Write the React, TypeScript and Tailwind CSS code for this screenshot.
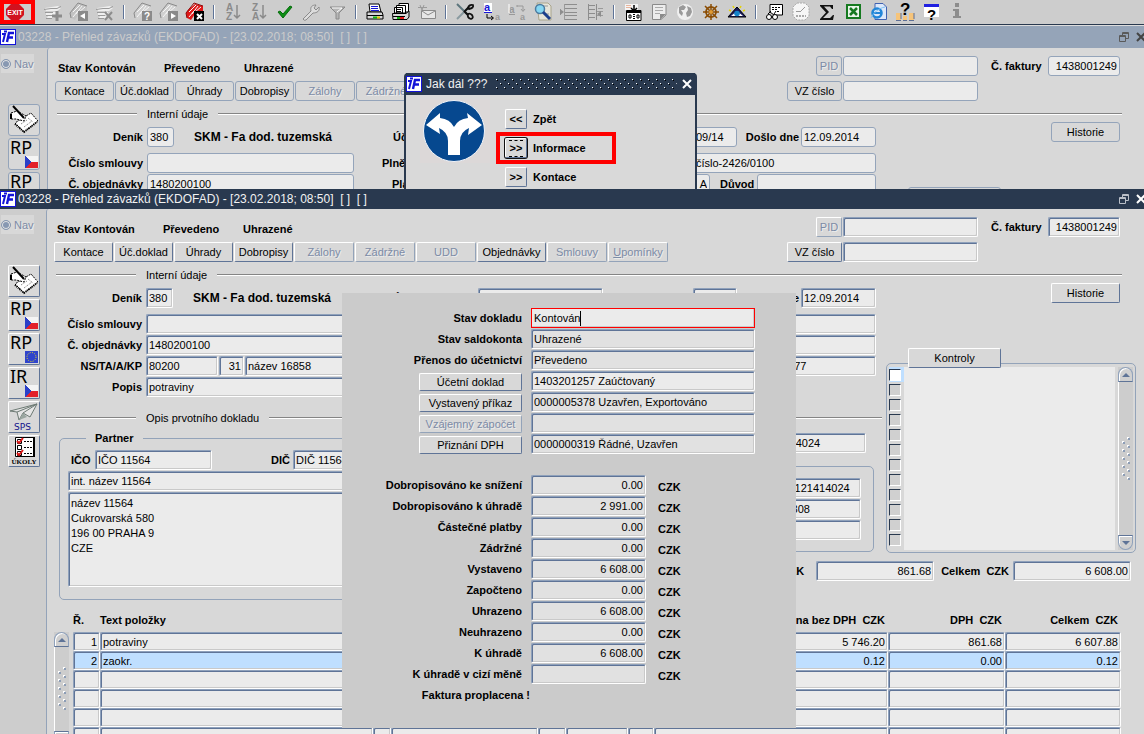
import React, { createContext, useContext } from 'react';
import clsx from 'clsx';

// true inside the inactive window, whose controls lose their bevel
const FlatContext = createContext(false);

const SUNKEN =
  'rounded-[2px] border border-t-[#8fa1bb] border-l-[#8fa1bb] border-r-white border-b-white shadow-[inset_1px_1px_0_#5f7497,inset_-1px_-1px_0_#c9c9c9]';
const RAISED =
  'rounded-[2px] border border-t-white border-l-white border-r-[#5f7497] border-b-[#5f7497]';
const RAISED_OFF =
  'rounded-[2px] border border-t-white border-l-white border-r-[#93a3b9] border-b-[#93a3b9]';
const FLAT = 'rounded-[3px] border border-[#94a4ba]';

interface FieldProps {
  value?: string;
  name?: string;
  className?: string;
  right?: boolean;
}

const Field: React.FC<FieldProps> = ({ value = '', name, className, right }) => {
  const flat = useContext(FlatContext);
  return (
    <input
      aria-label={name}
      defaultValue={value}
      className={clsx(
        'block h-5 min-w-0 shrink-0 px-[2px] text-[11px] text-black outline-none',
        flat ? FLAT : SUNKEN,
        right && 'text-right',
        className ?? 'w-full',
        !className?.includes('bg-') && 'bg-[#ebebeb]',
      )}
    />
  );
};

interface BtnProps {
  children: React.ReactNode;
  className?: string;
  disabled?: boolean;
}

const Btn: React.FC<BtnProps> = ({ children, className, disabled }) => {
  const flat = useContext(FlatContext);
  return (
    <button
      type="button"
      disabled={disabled}
      className={clsx(
        'flex shrink-0 items-center justify-center bg-[#d8d8d8] text-[11px] leading-none whitespace-nowrap',
        flat ? FLAT : disabled ? RAISED_OFF : RAISED,
        disabled ? 'text-[#7c8ba6] [text-shadow:1px_1px_0_#ebebeb]' : 'text-black',
        className,
      )}
    >
      {children}
    </button>
  );
};

const LabeledField: React.FC<FieldProps & { label: string }> = ({ label, ...rest }) => (
  <label className="flex items-center gap-1">
    <span className="w-[88px] shrink-0 text-right">{label}</span>
    <Field {...rest} />
  </label>
);

const Rule: React.FC<{ text: string; className?: string }> = ({ text, className }) => (
  <div className={clsx('flex items-center pt-[5px] pl-[2px] font-normal', className)}>
    <span className="h-[2px] w-20 border-t border-b border-t-[#858585] border-b-white" />
    <span className="px-[10px]">{text}</span>
    <span className="h-[2px] flex-1 border-t border-b border-t-[#858585] border-b-white" />
  </div>
);

const Grip = () => (
  <svg width="9" height="44" viewBox="0 0 9 44" className="my-auto shrink-0">
    {[0, 1, 2, 3, 4, 5].map((i) => (
      <g key={i}>
        <rect x="5" y={i * 8} width="2" height="2" fill="#fff" />
        <rect x="6" y={i * 8 + 1} width="2" height="2" fill="#8c9db6" />
        {i < 5 && <rect x="0" y={i * 8 + 4} width="2" height="2" fill="#fff" />}
        {i < 5 && <rect x="1" y={i * 8 + 5} width="2" height="2" fill="#8c9db6" />}
      </g>
    ))}
  </svg>
);

const Scrollbar: React.FC<{ className?: string }> = ({ className }) => (
  <div className={clsx('flex w-[15px] shrink-0 flex-col items-center bg-[#cdcdcd]', className)}>
    <button
      type="button"
      aria-label="Nahoru"
      className="flex h-[15px] w-full items-center justify-center rounded-t-full border border-[#8fa1bb] border-b-[#5f7497] bg-[#d0d0d0] shadow-[inset_1px_1px_0_#fff]"
    >
      <svg width="8" height="4" viewBox="0 0 8 4"><path d="M0 4L4 0L8 4Z" fill="#5f7497" /></svg>
    </button>
    <div className="flex w-full flex-1 justify-center border-l border-white">
      <Grip />
    </div>
    <button
      type="button"
      aria-label="Dolů"
      className="flex h-[15px] w-full items-center justify-center rounded-b-full border border-[#8fa1bb] border-t-[#5f7497] bg-[#d0d0d0] shadow-[inset_1px_1px_0_#fff]"
    >
      <svg width="8" height="4" viewBox="0 0 8 4"><path d="M0 0L4 4L8 0Z" fill="#5f7497" /></svg>
    </button>
  </div>
);

/* ---------- toolbar icons ---------- */

const Glyph: React.FC<{ x: number; y: number; size: number; fill?: string; children: string }> = ({
  x, y, size, fill = '#000', children,
}) => (
  <text x={x} y={y} fontSize={size} fill={fill} fontWeight="bold" fontFamily="Liberation Sans, sans-serif">
    {children}
  </text>
);

const Records = ({ mark }: { mark: 'plus' | 'cross' }) => (
  <>
    <path d="M2 6L15 4L18 6L14 9L3 9ZM3 10H13V13H3ZM5 14H11V16H4Z" fill="#efefef" />
    <path d="M1 7.500L8 6.500H14L18 4.500M2 10.500H10M3 13.500H10M3 16.500H9" stroke="#9a9a9a" fill="none" />
    {mark === 'plus' ? (
      <path d="M14 9V19M9 14H19" stroke="#8c8c8c" strokeWidth="3" />
    ) : (
      <path d="M10 10L17 18M17 10L10 18" stroke="#8c8c8c" strokeWidth="2" />
    )}
  </>
);

const Folder = ({ tone, line, badge, mark }: { tone: string; line: string; badge: string; mark: React.ReactNode }) => (
  <>
    <path d="M1 11L3 8L10 2L18 4L18 9L10 12L6 18L2 16Z" fill={tone} />
    <path d="M4 10L11 3M7 12L13 4M4 15L9 9M10 10L16 5" stroke="#f6f6f6" fill="none" />
    <path d="M2 16L1 11L9 1L18 4" stroke={line} fill="none" />
    <rect x="9" y="9" width="10" height="10" fill={badge} />
    {mark}
  </>
);

const ICONS: Record<string, React.ReactNode> = {
  'Nový záznam': <Records mark="plus" />,
  'Předchozí': <Folder tone="#c2c2c2" line="#8a8a8a" badge="#8a8a8a" mark={<path d="M16 11V17L11 14Z" fill="#fff" />} />,
  'Zrušit záznam': <Records mark="cross" />,
  'Zadat dotaz': <Folder tone="#d0d0d0" line="#8a8a8a" badge="#8a8a8a" mark={<Glyph x={11} y={18} size={10} fill="#fff">?</Glyph>} />,
  'Provést dotaz': <Folder tone="#d0d0d0" line="#8a8a8a" badge="#8a8a8a" mark={<path d="M12 11V17L17 14Z" fill="#fff" />} />,
  'Zrušit dotaz': <Folder tone="#e01818" line="#8c0a0a" badge="#000" mark={<path d="M12 12L17 17M17 12L12 17" stroke="#fff" strokeWidth="2" />} />,
  'Řadit vzestupně': (
    <>
      <Glyph x={3} y={9} size={10} fill="#8a8a8a">A</Glyph>
      <Glyph x={3} y={18} size={10} fill="#8a8a8a">Z</Glyph>
      <path d="M14 3V16M11 13L14 16L17 13" stroke="#8a8a8a" fill="none" strokeWidth="1.500" />
    </>
  ),
  'Řadit sestupně': (
    <>
      <Glyph x={3} y={9} size={10} fill="#8a8a8a">Z</Glyph>
      <Glyph x={3} y={18} size={10} fill="#8a8a8a">A</Glyph>
      <path d="M14 3V16M11 13L14 16L17 13" stroke="#8a8a8a" fill="none" strokeWidth="1.500" />
    </>
  ),
  Potvrdit: <path d="M3 10L8 16L17 5L15 4L8 12L5 9Z" fill="#0c8f14" stroke="#066b0c" />,
  'Nastavení': (
    <path d="M2 17L10 9C9 5 11 3 15 3L13 6L15 8L18 5C19 9 16 11 12 11L5 18Q3 19 2 17Z" fill="#dcdcdc" stroke="#8a8a8a" />
  ),
  Filtr: (
    <>
      <path d="M3 5H18L12 11V17H9V11Z" fill="#b5b5b5" stroke="#8a8a8a" />
      <path d="M5 6H15L10 10" stroke="#fff" fill="none" />
    </>
  ),
  Tisk: (
    <>
      <path d="M4 2H14L16 10H5Z" fill="#fff" stroke="#000" />
      <path d="M6 4.500H13M6 6.500H13M6 8.500H14" stroke="#1717d6" />
      <path d="M2 10H17L18 13V17H2V12Z" fill="#d6d6d6" stroke="#000" />
      <path d="M2 13.500H18" stroke="#000" />
      <path d="M8 15.500H12" stroke="#12b512" strokeWidth="2" />
      <path d="M12 15.500H15" stroke="#e0cc00" strokeWidth="2" />
    </>
  ),
  'Hromadný tisk': (
    <>
      <path d="M8 1.500H17.500V10H8Z" fill="#fff" stroke="#000" />
      <path d="M5.500 3.500H14.500V11H5.500ZM3.500 5.500H11.500V11H3.500Z" fill="#fff" stroke="#000" />
      <path d="M1.500 11.500H15L18 9V15L16 17.500H2Z" fill="#d6d6d6" stroke="#000" />
      <path d="M5 7.500H10M5 9.500H10M2 14.500H14" stroke="#000" />
      <path d="M6 16H9" stroke="#12b512" strokeWidth="2" />
      <path d="M9 16H13" stroke="#e01818" strokeWidth="2" />
    </>
  ),
  'Odeslat poštou': (
    <>
      <path d="M4.500 8.500H18.500V16.500H4.500Z" fill="#e6e6e6" stroke="#8a8a8a" />
      <path d="M5 9L11 13L18 9" stroke="#8a8a8a" fill="none" />
      <path d="M1 5.500H10M3 3L5 8M7 3L5 8" stroke="#9a9a9a" />
    </>
  ),
  Vyjmout: (
    <>
      <path d="M2 2L13 13" stroke="#5d757c" strokeWidth="2" />
      <path d="M2 17L13 6" stroke="#8a9aa0" strokeWidth="2" />
      <path d="M9 9L13 13M9 10L14 5" stroke="#111" strokeWidth="2" />
      <path d="M13 6Q14 2 18 3Q19 6 14 7ZM13 12Q12 16 16 17Q19 16 17 13Q15 11 13 12Z" fill="none" stroke="#111" strokeWidth="1.800" />
    </>
  ),
  'Kopírovat hodnotu': (
    <>
      <rect x="3" y="1" width="8" height="10" fill="#fff" />
      <Glyph x={3} y={9} size={11} fill="#1717d6">a</Glyph>
      <path d="M3 10.500H11" stroke="#1717d6" />
      <path d="M6 12V16H12M10 14L12.500 16L10 18" stroke="#000" fill="none" />
      <Glyph x={14} y={18} size={9} fill="#999">a</Glyph>
    </>
  ),
  'Kopírovat záznam': (
    <>
      <Glyph x={2} y={11} size={10} fill="#999">a</Glyph>
      <path d="M2 12.500H8M10 4H16V9M9 4H11M14 7L16 9.500L18 7" stroke="#999" fill="none" />
      <path d="M2 2V11" stroke="#fff" />
      <Glyph x={13} y={18} size={9} fill="#999">a</Glyph>
    </>
  ),
  Hledat: (
    <>
      <path d="M4 1H15L18 4V18H6Z" fill="#e6e4da" stroke="#aaa58c" />
      <path d="M9 4H15M12 12H16" stroke="#999" />
      <circle cx="7" cy="7" r="4.500" fill="#86d7f3" stroke="#4a7ba0" strokeWidth="1.500" />
      <path d="M10 10L17 17" stroke="#1c3f8c" strokeWidth="3" />
    </>
  ),
  'Vložit řádek': (
    <>
      <path d="M6 2.500H18M6 6.500H18M6 10.500H18M6 13.500H18M6 17.500H18" stroke="#8d8d8d" />
      <path d="M1.500 7V13M5.500 2V18" stroke="#9a9a9a" />
      <path d="M1 7L5 10L1 13Z" fill="#8d8d8d" />
    </>
  ),
  'Odebrat řádek': (
    <>
      <path d="M3.500 2V18M3 3.500H10M3 7.500H10M3 11.500H10M3 15.500H10M11.500 2V18" stroke="#8d8d8d" />
      <path d="M12 9.500H18M12 13.500H18M18 6.500H13" stroke="#9a9a9a" />
      <path d="M12 12L16 9V15Z" fill="#8d8d8d" />
    </>
  ),
  Export: (
    <>
      <path d="M2 2H15V8H2Z" fill="#f4f4f4" />
      <path d="M3 3.500H8M3 5.500H8" stroke="#e8b49c" />
      <path d="M3.500 8.500H18V18.500H3.500Z" fill="#fff" stroke="#000" />
      <path d="M3 10H18" stroke="#000" strokeWidth="2" />
      <path d="M11 3V8M8 6L11 9L14 6" stroke="#000" strokeWidth="1.500" fill="none" />
      <path d="M6 13H8V16H6ZM10 12.500H12M10 14.500H12M10 16.500H12M14 13H16V16H14Z" stroke="#000" fill="none" />
    </>
  ),
  'Poznámka': (
    <>
      <path d="M3.500 2.500H17V13L12 17.500H3.500Z" fill="#ececec" stroke="#8a8a8a" />
      <path d="M6 5.500H14M6 8.500H14M6 11.500H11" stroke="#aaa" />
      <path d="M17 12H11V18Z" fill="#8a8a8a" />
    </>
  ),
  Web: (
    <>
      <circle cx="10" cy="10" r="8" fill="#f0f0f0" />
      <path d="M4 5L8 3L11 5L9 8L6 8L8 11L7 14L4 11ZM12 4L16 6L17 10L15 14L12 15L11 11L13 8Z" fill="#9a9a9a" />
    </>
  ),
  Moduly: (
    <>
      <circle cx="10" cy="10" r="5" fill="none" stroke="#8a4d05" strokeWidth="1.800" />
      <path d="M10 2V18M2 10H18M4 4L16 16M16 4L4 16" stroke="#8a4d05" strokeWidth="1.500" />
      <circle cx="10" cy="10" r="2" fill="#e09b34" />
    </>
  ),
  'Přehled': (
    <>
      <path d="M1 15L10 5L19 15Z" fill="#1a1a5e" stroke="#000" />
      <path d="M4 14Q10 7 16 14Z" fill="#fff" />
      <circle cx="10" cy="11.500" r="2.800" fill="#1583c8" />
      <path d="M2 8L4 9M6 4L7 6M14 4L13 6M18 8L16 9" stroke="#e5d300" strokeWidth="1.500" />
    </>
  ),
  'Detail řádku': (
    <>
      <path d="M5 2.500H17.500V13H9L5 10Z" fill="#fff" stroke="#000" />
      <path d="M7 5.500H15M7 7.500H13M12 9.500H15" stroke="#000" strokeDasharray="2 1" />
      <circle cx="4" cy="15" r="2.500" fill="#fff" stroke="#000" />
      <circle cx="10" cy="15" r="2.500" fill="#fff" stroke="#000" />
      <path d="M3 12L6 9M9 12L11 9M6 15H8" stroke="#000" />
    </>
  ),
  Historie: (
    <>
      <path d="M6 1H14L18 5V14L14 18H6L2 14V5Z" fill="#f6f6f6" stroke="#aaa" strokeDasharray="2 1" />
      <path d="M9 10L14 5M5 9.500H9" stroke="#999" />
      <path d="M5 14H15" stroke="#aaa" strokeDasharray="2 1" strokeWidth="2" />
    </>
  ),
  Suma: <path d="M3 3H16V7H15L13 4.500H7L12 10L6 16H13L16 13H17L16 18H3V17L9 10.500L3 4Z" fill="#111" />,
  Excel: (
    <>
      <rect x="3" y="2" width="15" height="15" fill="#167a20" />
      <rect x="5" y="4" width="11" height="11" fill="#eaf5ea" />
      <path d="M7 6L14 13M14 6L7 13" stroke="#167a20" strokeWidth="2.500" />
    </>
  ),
  'Prohlížeč': (
    <>
      <path d="M6 1.500H14L17.500 5V17.500H6Z" fill="#dce8fa" stroke="#4062b0" />
      <circle cx="8" cy="11" r="4.500" fill="#dce8fa" stroke="#2286d8" strokeWidth="2.600" />
      <path d="M4 11H13" stroke="#2286d8" strokeWidth="2" />
      <path d="M2 16C4 11 10 6 16 5" stroke="#7cc2f2" fill="none" />
    </>
  ),
  'Kdo používá': (
    <>
      <path d="M1 11H6V18H1ZM8 14H12V18H8ZM14 11H19V18H14Z" fill="#f6c47a" />
      <path d="M1 18.500H6M8 18.500H12M14 18.500H19M6 11V17M19 11V17" stroke="#5d6f96" />
      <Glyph x={5} y={13} size={17}>?</Glyph>
    </>
  ),
  'Nápověda': (
    <>
      <rect x="3" y="2" width="15" height="13" fill="#fff" />
      <rect x="3" y="2" width="15" height="3" fill="#2020e0" />
      <Glyph x={6} y={18} size={15}>?</Glyph>
    </>
  ),
  'O aplikaci': (
    <path d="M8 1H12V5H8ZM6 7H12V14H14V16H6V14H8V9H6Z" fill="#8d8d8d" />
  ),
};

const GROUPS = [
  ['Nový záznam', 'Předchozí', 'Zrušit záznam'],
  ['Zadat dotaz', 'Provést dotaz', 'Zrušit dotaz'],
  ['Řadit vzestupně', 'Řadit sestupně', 'Potvrdit', 'Nastavení', 'Filtr'],
  ['Tisk', 'Hromadný tisk', 'Odeslat poštou'],
  ['Vyjmout', 'Kopírovat hodnotu', 'Kopírovat záznam', 'Hledat', 'Vložit řádek', 'Odebrat řádek'],
  ['Export', 'Poznámka', 'Web', 'Moduly', 'Přehled'],
  ['Detail řádku', 'Historie', 'Suma', 'Excel', 'Prohlížeč', 'Kdo používá', 'Nápověda', 'O aplikaci'],
];

const Toolbar = () => (
  <div className="flex h-[25px] shrink-0 border-b border-[#29394f] bg-[#cdcdcd]">
    <button
      type="button"
      aria-label="Exit"
      className="mr-[5px] flex h-6 w-[35px] shrink-0 items-center border-4 border-[#f00] bg-[#cdcdcd] pl-[2px]"
    >
      <svg width="18" height="16" viewBox="0 0 18 16">
        <path d="M5 0H13L18 5V11L13 16H5L0 11V5Z" fill="#d1121f" />
        <text x="9" y="11" textAnchor="middle" fontSize="7" fontWeight="bold" fill="#fff" fontFamily="Liberation Sans, sans-serif">EXIT</text>
      </svg>
    </button>
    {GROUPS.map((group, i) => (
      <React.Fragment key={i}>
        {i > 0 && (
          <span className="flex w-3 shrink-0 items-center justify-center">
            <span className="h-[14px] w-[2px] border-r border-l border-r-white border-l-[#5f7497]" />
          </span>
        )}
        {group.map((name) => (
          <button key={name} type="button" aria-label={name} className="flex h-6 w-[26px] shrink-0 items-center justify-center">
            <svg width="20" height="20" viewBox="0 0 20 20">{ICONS[name]}</svg>
          </button>
        ))}
      </React.Fragment>
    ))}
  </div>
);

/* ---------- window chrome ---------- */

const AppIcon = () => (
  <svg width="16" height="16" viewBox="0 0 16 16" className="shrink-0">
    <rect x="0.500" y="0.500" width="15" height="15" fill="#fff" stroke="#1212d8" />
    <path d="M2 5H5L3 13M4 2.500H7" stroke="#1212d8" strokeWidth="2" fill="none" />
    <path d="M7 13L9 4H14M8 8.500H13" stroke="#1212d8" strokeWidth="2.400" fill="none" />
  </svg>
);

const TitleBar = () => {
  const flat = useContext(FlatContext);
  return (
    <div
      className={clsx(
        'flex shrink-0 items-center gap-[2px] text-[12px] whitespace-pre',
        flat ? 'h-[22px] bg-[#95a4b8] text-[#cbcbcb]' : 'h-5 bg-[#29394f] text-[#f2f2f2]',
      )}
    >
      <AppIcon />
      <span>03228 - Přehled závazků (EKDOFAD) - [23.02.2018; 08:50]  [ ]  [ ]</span>
      <button type="button" aria-label="Obnovit" className="mr-1 ml-auto">
        <svg width="12" height="12" viewBox="0 0 12 12" fill="none" stroke={flat ? '#5a5a5a' : '#b9bfc8'}>
          <path d="M1.500 4.500H7.500V10.500H1.500ZM1 5.500H8M4.500 4V1.500H10.500V7.500H8M4 2.500H10" />
        </svg>
      </button>
      <button type="button" aria-label="Zavřít" className="-mr-px">
        <svg width="9" height="12" viewBox="0 0 9 12" fill="none" stroke={flat ? '#444' : '#fff'} strokeWidth="2">
          <path d="M1 2L9 10M9 2L1 10" />
        </svg>
      </button>
    </div>
  );
};

const Flag = () => (
  <g shapeRendering="crispEdges">
    <rect x="16" y="17" width="13" height="6" fill="#f4f4f4" />
    <rect x="16" y="23" width="13" height="6" fill="#e3202a" />
    <path d="M16 17L23 23L16 29Z" fill="#2a3fc8" />
  </g>
);

const Big: React.FC<{ children: string }> = ({ children }) => (
  <text x="1" y="15" fontSize="18" fontFamily="Noto Sans, sans-serif">{children}</text>
);

const SIDE_ITEMS: { name: string; icon: React.ReactNode }[] = [
  {
    name: 'Podpis',
    icon: (
      <>
        <path d="M12 14L22 8L29 16L15 27L6 18Z" fill="#fff" stroke="#000" strokeDasharray="2 1" />
        <path d="M2 8L8 6L17 11L15 16L7 14L2 14Z" fill="#fff" stroke="#000" strokeDasharray="2 1" />
        <path d="M6 19L15 27L28 17" fill="none" stroke="#000" strokeWidth="2" strokeDasharray="1 1" />
        <path d="M4 1L15 13" stroke="#000" strokeWidth="2" />
        <path d="M2 9V14" stroke="#000" strokeWidth="2" />
        <path d="M12 19L18 15M15 22L23 16M19 13L24 17" stroke="#777" strokeDasharray="1 1" />
      </>
    ),
  },
  { name: 'RP CZ', icon: <><Big>RP</Big><Flag /></> },
  {
    name: 'RP EU',
    icon: (
      <>
        <Big>RP</Big>
        <rect x="16" y="17" width="13" height="12" fill="#2f44cc" />
        <circle cx="22.500" cy="23" r="4.500" fill="none" stroke="#f2e21c" strokeDasharray="1 1.350" />
      </>
    ),
  },
  { name: 'IR CZ', icon: <><Big>IR</Big><Flag /></> },
  {
    name: 'SPS',
    icon: (
      <>
        <path d="M1 9L28 2L21 15L14 11L10 18L8 10Z" fill="#e6e6e6" stroke="#6d7a74" />
        <path d="M8 10L28 2L14 11M10 18L16 13" fill="none" stroke="#6d7a74" />
        <path d="M10 18L14 11L18 15Z" fill="#9aa6a0" />
        <text x="5" y="28" fontSize="9" fontFamily="DejaVu Sans, sans-serif" fill="#12128c">SPS</text>
      </>
    ),
  },
  {
    name: 'Úkoly',
    icon: (
      <>
        <path d="M6.500 1.500H25V20.500H6.500Z" fill="#fff" stroke="#000" />
        <path d="M25 1V21" stroke="#000" strokeWidth="2" />
        <path d="M8.500 3.500H12.500V7.500H8.500ZM8.500 9.500H12.500V13.500H8.500ZM8.500 15.500H12.500V19.500H8.500Z" fill="none" stroke="#000" />
        <path d="M8 5L10 7L14 2M8 17L10 19L14 14" fill="none" stroke="#e01818" strokeWidth="2" />
        <path d="M15 5.500H23M15 11.500H23M15 17.500H23" stroke="#000" strokeDasharray="2 1" />
        <text x="15" y="28" textAnchor="middle" fontSize="7" fontWeight="bold" fontFamily="Liberation Serif, serif">ÚKOLY</text>
      </>
    ),
  },
];

const Sidebar = () => {
  const flat = useContext(FlatContext);
  return (
    <aside className={clsx('shrink-0 bg-[#cdcdcd] pt-[6px]', flat ? 'w-[47px]' : 'w-[46px]')}>
      <label className="ml-px flex h-[19px] w-[33px] items-center gap-[3px] bg-[#d8d8d8] text-[#7c8ba6] [text-shadow:1px_1px_0_#ebebeb]">
        <input
          type="radio"
          checked
          readOnly
          className="size-[10px] shrink-0 appearance-none rounded-full border border-[#8798b2] bg-[#8798b2] shadow-[inset_0_0_0_1px_#e4e4e4]"
        />
        <span>Nav</span>
      </label>
      <div className="mt-[31px] ml-2 flex flex-col gap-[2px]">
        {SIDE_ITEMS.map((item) => (
          <button
            key={item.name}
            type="button"
            aria-label={item.name}
            className={clsx('size-8 bg-[#d8d8d8]', flat ? FLAT : RAISED)}
          >
            <svg width="30" height="30" viewBox="0 0 30 30">{item.icon}</svg>
          </button>
        ))}
      </div>
    </aside>
  );
};

/* ---------- invoice form ---------- */

const ROWS = [
  ['1', 'potraviny', '', '', '', '', '', '5 746.20', '861.68', '6 607.88'],
  ['2', 'zaokr.', '', '', '', '', '', '0.12', '0.00', '0.12'],
  ['', '', '', '', '', '', '', '', '', ''],
  ['', '', '', '', '', '', '', '', '', ''],
  ['', '', '', '', '', '', '', '', '', ''],
  ['', '', '', '', '', '', '', '', '', ''],
];

const ItemsTable = () => (
  <div className="flex pr-[15px]">
    <Scrollbar className="mt-8" />
    <table className="ml-1 w-full table-fixed border-collapse">
      <colgroup>
        <col className="w-[27px]" />
        <col />
        <col className="w-[18px]" />
        <col className="w-[147px]" />
        <col className="w-[28px]" />
        <col className="w-[62px]" />
        <col className="w-[26px]" />
        <col className="w-[234px]" />
        <col className="w-[117px]" />
        <col className="w-[116px]" />
      </colgroup>
      <thead>
        <tr className="h-8 align-bottom text-[11px] leading-4">
          <th className="p-0 pb-1 text-left">Ř.</th>
          <th className="p-0 pb-1 text-left">Text položky</th>
          <th /><th /><th /><th /><th />
          <th className="p-0 pr-[3px] pb-1 text-right whitespace-pre">Cena bez DPH  CZK</th>
          <th className="p-0 pr-[3px] pb-1 text-right whitespace-pre">DPH  CZK</th>
          <th className="p-0 pr-[3px] pb-1 text-right whitespace-pre">Celkem  CZK</th>
        </tr>
      </thead>
      <tbody>
        {ROWS.map((row, r) => (
          <tr key={r} className="h-[19px]">
            {row.map((cell, c) => (
              <td key={c} className="p-0">
                <input
                  aria-label={`Řádek ${r + 1}, sloupec ${c + 1}`}
                  defaultValue={cell}
                  className={clsx(
                    'block h-[19px] w-full px-[2px] text-[11px] font-normal outline-none',
                    SUNKEN,
                    r === 1 ? 'bg-[#bfdfff]' : 'bg-[#ebebeb]',
                    (c === 0 || c > 6) && 'text-right',
                  )}
                />
              </td>
            ))}
          </tr>
        ))}
      </tbody>
    </table>
  </div>
);

const ChecksPanel = () => (
  <div className="relative mt-[60px] flex h-[190px] w-full rounded-[5px] border border-[#93a3b9] px-[2px] pt-[3px] pb-[2px]">
    <Btn className="absolute -top-4 left-[21px] h-5 w-[93px]">Kontroly</Btn>
    <div className="flex w-[15px] flex-col">
      {Array.from({ length: 12 }, (_, i) => (
        <span key={i} className={clsx('flex h-[15px] items-center', i === 0 && 'bg-[#bfdfff]')}>
          <input
            type="checkbox"
            aria-label={`Kontrola ${i + 1}`}
            className={clsx(
              'size-3 appearance-none border border-t-[#29394f] border-l-[#29394f] border-r-white border-b-white',
              i === 0 ? 'bg-white' : 'bg-[#d0d0d0]',
            )}
          />
        </span>
      ))}
    </div>
    <div className="mr-[3px] flex-1 bg-[#ebebeb]" />
    <Scrollbar />
  </div>
);

const InvoiceForm = () => (
  <main className="min-w-0 flex-1 rounded-tl-[3px] border-l border-[#93a3b9] bg-[#d8d8d8] pt-2 pr-2 pl-[7px] text-[11px] leading-4 font-bold text-black">
    <div className="flex h-5 pr-4 pl-[3px]">
      <div className="flex items-end">
        <span className="w-[27px]">Stav</span>
        <span className="w-[79px]">Kontován</span>
        <span className="w-20">Převedeno</span>
        <span>Uhrazené</span>
      </div>
      <Btn className="ml-auto h-5 w-[26px] font-normal" disabled>PID</Btn>
      <Field name="PID" className="ml-px w-[135px] font-normal" />
      <label className="ml-[13px] flex items-center">
        <span className="w-[57px]">Č. faktury</span>
        <Field value="1438001249" right className="w-[72px] font-normal" />
      </label>
    </div>

    <div className="mt-[5px] flex h-5 gap-px pr-[158px] font-normal">
      <Btn className="w-[59px]">Kontace</Btn>
      <Btn className="w-[59px]">Úč.doklad</Btn>
      <Btn className="w-[59px]">Úhrady</Btn>
      <Btn className="w-[59px]">Dobropisy</Btn>
      <Btn className="w-[60px]" disabled>Zálohy</Btn>
      <Btn className="w-[60px]" disabled>Zádržné</Btn>
      <Btn className="w-[60px]" disabled>UDD</Btn>
      <Btn className="w-[69px]">Objednávky</Btn>
      <Btn className="w-[60px]" disabled>Smlouvy</Btn>
      <Btn className="w-[60px]" disabled><span><u>U</u>pomínky</span></Btn>
      <Btn className="ml-auto w-[55px]">VZ číslo</Btn>
      <Field name="VZ číslo" className="w-[135px]" />
    </div>

    <Rule text="Interní údaje" className="mr-[14px] h-[21px]" />

    <div className="flex gap-1">
      <div className="min-w-0 flex-1 pt-[5px]">
        <div className="flex flex-col gap-px pr-[6px] [&_input]:font-normal">
          <div className="mb-[5px] flex items-center">
            <LabeledField label="Deník" value="380" className="w-[27px]" />
            <span className="ml-5 text-[12px] whitespace-nowrap">SKM - Fa dod. tuzemská</span>
            <label className="ml-auto flex items-center">
              <span className="w-[85px]">Účetní datum</span>
              <Field className="w-[125px]" />
            </label>
            <Field name="Období" value="09/14" className="ml-[90px] w-[44px]" />
            <label className="ml-[7px] flex items-center">
              <span className="w-[57px] pr-[2px] text-right whitespace-nowrap">Došlo dne</span>
              <Field value="12.09.2014" className="w-[75px]" />
            </label>
          </div>
          <div className="flex items-center">
            <LabeledField label="Číslo smlouvy" className="w-[207px]" />
            <span className="ml-auto w-[311px]">Plnění</span>
            <Field name="Plnění" value="číslo-2426/0100" className="w-[183px]" />
          </div>
          <div className="flex items-center">
            <LabeledField label="Č. objednávky" value="1480200100" className="w-[207px]" />
            <span className="ml-auto w-[292px]">Plátce</span>
            <Field name="Plátce" value="A" right className="w-[26px]" />
            <label className="ml-[10px] flex items-center gap-[2px]">
              <span className="w-[35px]">Důvod</span>
              <Field className="w-[119px]" />
            </label>
          </div>
          <div className="flex items-center">
            <LabeledField label="NS/TA/A/KP" value="80200" className="w-[72px]" />
            <Field name="TA" value="31" right className="ml-px w-[25px]" />
            <Field name="Název" value="název 16858" className="ml-px w-[180px]" />
            <Field name="Účet" value="12345-77" className="ml-auto w-[119px]" />
          </div>
          <LabeledField label="Popis" value="potraviny" className="w-[280px]" />
        </div>

        <Rule text="Opis prvotního dokladu" className="h-9" />

        <div className="flex justify-between gap-4 pr-2 pl-[5px]">
          <fieldset className="max-w-[440px] min-w-0 flex-1 rounded-[5px] border border-[#93a3b9] px-2 pb-3">
            <legend className="ml-[18px] px-[9px] leading-[10px]">Partner</legend>
            <div className="flex flex-col gap-px pt-[7px] [&_input]:font-normal">
              <div className="flex items-center">
                <label className="flex items-center gap-1 pl-[3px]">
                  <span className="w-5">IČO</span>
                  <Field value="IČO 11564" className="w-[117px]" />
                </label>
                <label className="ml-[59px] flex items-center gap-1">
                  <span className="w-[18px]">DIČ</span>
                  <Field value="DIČ 11564" className="w-[117px]" />
                </label>
              </div>
              <Field name="Interní název" value="int. název 11564" />
              <textarea
                aria-label="Adresa"
                defaultValue={'název 11564\nCukrovarská 580\n196 00 PRAHA 9\nCZE'}
                className={clsx('block h-[95px] w-full resize-none bg-[#ebebeb] px-[2px] pt-[3px] text-[11px] leading-[15px] font-normal', SUNKEN)}
              />
            </div>
          </fieldset>
          <div className="w-[300px] [&_input]:font-normal">
            <div className="pr-2 pl-[182px]"><Field name="Doklad" value="1231414024" /></div>
            <div className="mt-[13px] flex flex-col gap-px rounded-[5px] border border-[#93a3b9] py-[11px] pr-3 pl-[186px]">
              <Field name="Variabilní symbol" value="00012121414024" />
              <Field name="Konstantní symbol" value="0000 308" />
              <Field name="Specifický symbol" />
            </div>
          </div>
        </div>
      </div>

      <div className="flex w-[250px] shrink-0 flex-col items-end font-normal">
        <Btn className="mr-4 h-5 w-[69px]">Historie</Btn>
        <ChecksPanel />
        <div className="mt-2 flex w-max items-center pr-[5px] whitespace-pre [&_input]:font-normal">
          <label className="flex items-center gap-3 font-bold">
            CZK
            <Field value="861.68" right className="w-[118px]" />
          </label>
          <label className="ml-[7px] flex items-center gap-1 font-bold">
            Celkem  CZK
            <Field value="6 608.00" right className="w-[118px]" />
          </label>
        </div>
      </div>
    </div>

    <ItemsTable />
  </main>
);

/* ---------- status panel over the invoice ---------- */

const AMOUNTS = [
  ['Dobropisováno ke snížení', '0.00'],
  ['Dobropisováno k úhradě', '2 991.00'],
  ['Částečné platby', '0.00'],
  ['Zádržné', '0.00'],
  ['Vystaveno', '6 608.00'],
  ['Započteno', '0.00'],
  ['Uhrazeno', '6 608.00'],
  ['Neuhrazeno', '0.00'],
  ['K úhradě', '6 608.00'],
  ['K úhradě v cizí měně', ''],
];

const DOCS = [
  { label: 'Účetní doklad', value: '1403201257 Zaúčtovaný' },
  { label: 'Vystavený příkaz', value: '0000005378 Uzavřen, Exportováno' },
  { label: 'Vzájemný zápočet', value: '', disabled: true },
  { label: 'Přiznání DPH', value: '0000000319 Řádné, Uzavřen' },
];

const StatusPanel = () => (
  <div className="absolute top-[104px] left-[342px] flex w-[454px] flex-col gap-px bg-[#cbcbcb] pt-[15px] pb-[23px] text-[11px] leading-4 font-bold [&_input]:font-normal">
    <label className="flex items-center gap-[9px]">
      <span className="w-[180px] text-right">Stav dokladu</span>
      <span className="flex h-5 w-[224px] items-center border border-[#f00] bg-[#ebebeb] px-[2px] shadow-[inset_-1px_-1px_0_#c9c9c9]">
        <input defaultValue="Kontován" className="w-[47px] border-r border-black text-[11px] leading-[15px] outline-none" />
      </span>
    </label>
    {[['Stav saldokonta', 'Uhrazené'], ['Přenos do účetnictví', 'Převedeno']].map(([label, value]) => (
      <label key={label} className="flex items-center gap-[9px]">
        <span className="w-[180px] text-right">{label}</span>
        <Field value={value} className="w-[224px] bg-[#e1e1e1]" />
      </label>
    ))}
    {DOCS.map((doc, i) => (
      <div key={doc.label} className="flex items-end gap-[9px] pl-[77px] font-normal">
        <Btn className="h-[18px] w-[103px]" disabled={doc.disabled}>{doc.label}</Btn>
        <Field
          name={doc.label}
          value={doc.value}
          className={i === 0 ? 'w-[224px] bg-[#ebebeb]' : 'w-[224px] bg-[#e1e1e1]'}
        />
      </div>
    ))}
    <div className="mt-5 flex flex-col gap-px">
      {AMOUNTS.map(([label, value]) => (
        <div key={label} className="flex items-center">
          <label className="flex items-center gap-[9px]">
            <span className="w-[180px] text-right">{label}</span>
            <Field value={value} right className="w-[115px] bg-[#e1e1e1]" />
          </label>
          <span className="pt-1 pl-3">CZK</span>
        </div>
      ))}
    </div>
    <p className="w-[188px] py-[2px] text-right">Faktura proplacena !</p>
  </div>
);

/* ---------- "what next" dialog ---------- */

const NextStepDialog = () => (
  <div
    role="dialog"
    aria-label="Jak dál ???"
    className="absolute top-[47px] left-[404px] w-[293px] rounded-t-[4px] border-r-2 border-l-2 border-[#29394f] bg-[#d9d9d9] text-[11px] font-bold"
  >
    <div className="flex h-[22px] items-center gap-1 bg-[#29394f] text-[12px] font-normal text-[#f2f2f2]">
      <AppIcon />
      <span>Jak dál ???</span>
      <svg height="12" className="mr-px ml-1 min-w-0 flex-1">
        <defs>
          <pattern id="grip" width="8" height="8" patternUnits="userSpaceOnUse">
            <rect x="1" y="1" width="1" height="1" fill="#fff" />
            <rect x="2" y="2" width="1" height="1" fill="#000" />
            <rect x="5" y="5" width="1" height="1" fill="#fff" />
            <rect x="6" y="6" width="1" height="1" fill="#000" />
          </pattern>
        </defs>
        <rect width="100%" height="12" fill="url(#grip)" />
      </svg>
      <button type="button" aria-label="Zavřít" className="mr-[3px]">
        <svg width="10" height="10" viewBox="0 0 10 10" stroke="#fff" strokeWidth="2"><path d="M1 1L9 9M9 1L1 9" /></svg>
      </button>
    </div>
    <div className="flex h-[110px] gap-[15px] pt-1 pl-[14px]">
      <svg width="70" height="64" viewBox="0 0 70 64" className="bg-[#dcd8d8]">
        <circle cx="34" cy="32" r="30.500" fill="#06488f" stroke="#f2f5fa" />
        <path
          d="M28 56V42Q28 33 19 29L20 35L6 26L20 14L20 19Q30 20 34 28Q38 20 48 19L47 14L62 26L48 36L49 29Q40 33 40 42V56Z"
          fill="#fff"
        />
      </svg>
      <div className="flex flex-col gap-[9px] pt-[10px]">
        <div className="flex items-center gap-[6px]"><Btn className="h-5 w-[22px]">&lt;&lt;</Btn>Zpět</div>
        <div className="relative flex items-center gap-[6px]">
          <Btn className="h-5 w-[22px] shadow-[0_0_0_1px_#111]">
            <span className="border-y border-dashed border-black px-px py-[2px]">&gt;&gt;</span>
          </Btn>
          Informace
          <span className="pointer-events-none absolute -top-[6px] -left-[9px] h-8 w-[120px] border-4 border-[#f00]" />
        </div>
        <div className="flex items-center gap-[6px]"><Btn className="h-5 w-[22px]">&gt;&gt;</Btn>Kontace</div>
      </div>
    </div>
  </div>
);

export default function App() {
  return (
    <div className="flex h-screen flex-col overflow-hidden bg-[#cdcdcd] font-['Liberation_Sans',Arial,sans-serif] text-[11px] leading-4 text-black">
      <Toolbar />

      <section className="relative flex h-[164px] shrink-0 flex-col overflow-hidden border-t border-[#dcdcdc]">
        <FlatContext.Provider value={true}>
          <TitleBar />
          <div className="flex min-h-0 flex-1">
            <Sidebar />
            <InvoiceForm />
          </div>
        </FlatContext.Provider>
        <NextStepDialog />
      </section>

      <section className="relative flex min-h-0 flex-1 flex-col overflow-hidden">
        <TitleBar />
        <div className="flex min-h-0 flex-1">
          <Sidebar />
          <InvoiceForm />
        </div>
        <StatusPanel />
      </section>
    </div>
  );
}
